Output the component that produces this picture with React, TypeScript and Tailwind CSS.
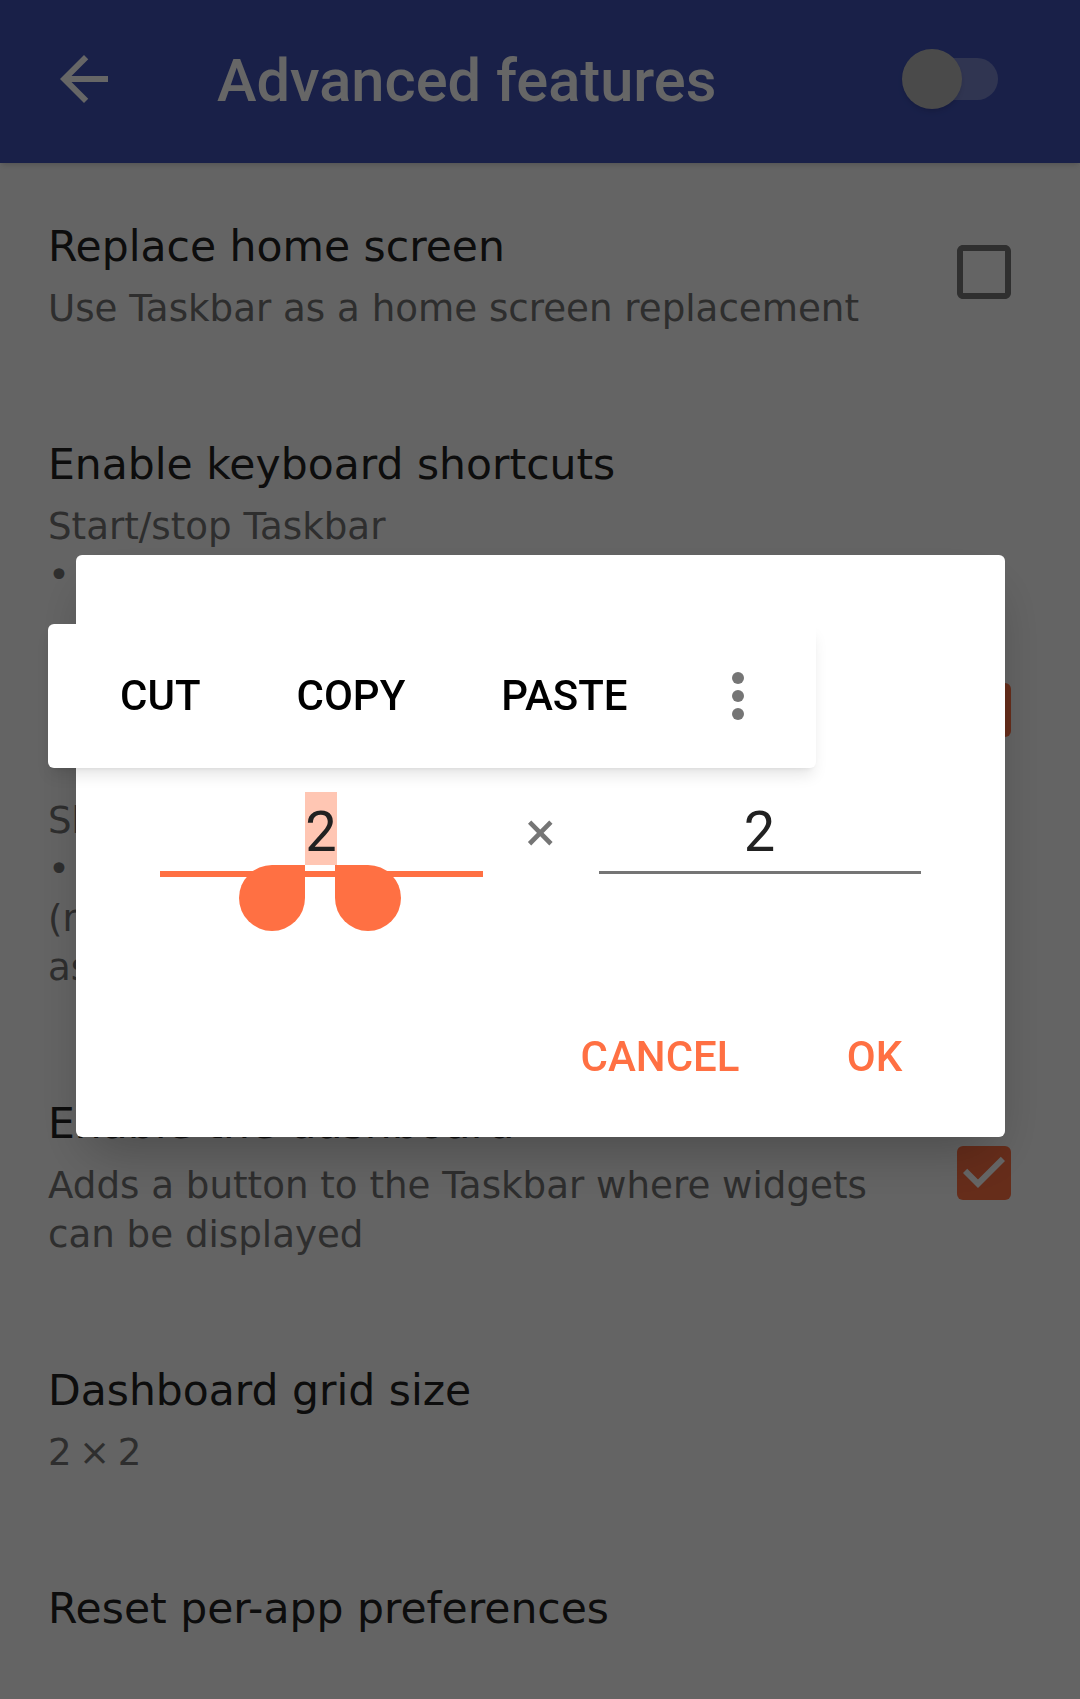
import React from "react";

type PrefProps = {
  title: string;
  summary?: string | string[];
  checked?: boolean;
};

function Checkbox({ checked }: { checked: boolean }) {
  return (
    <svg viewBox="0 0 24 24" className="w-[72px] h-[72px] shrink-0">
      {checked ? (
        <>
          <rect x="3" y="3" width="18" height="18" rx="2" fill="#FF7043" />
          <path d="M10 17l-5-5 1.41-1.41L10 14.17l7.59-7.59L19 8l-9 9z" fill="#fff" />
        </>
      ) : (
        <path
          d="M19 5v14H5V5h14m0-2H5c-1.1 0-2 .9-2 2v14c0 1.1.9 2 2 2h14c1.1 0 2-.9 2-2V5c0-1.1-.9-2-2-2z"
          fill="#757575"
        />
      )}
    </svg>
  );
}

function Pref({ title, summary, checked }: PrefProps) {
  return (
    <div className="flex items-center pl-[48px] pr-[60px] py-[52px] font-['DejaVu_Sans',sans-serif]">
      <div className="flex-1 min-w-0">
        <div className="text-[42.5px] leading-[56px] text-[#212121]">{title}</div>
        {summary && (
          <div className="mt-[9px] text-[37.2px] leading-[49px] text-[#737373]">
            {Array.isArray(summary)
              ? summary.map((line, i) => (
                  <div key={i} className="whitespace-nowrap">
                    {line || "\u00a0"}
                  </div>
                ))
              : summary}
          </div>
        )}
      </div>
      {checked !== undefined && (
        <div className="ml-[33px] mb-[9px]">
          <Checkbox checked={checked} />
        </div>
      )}
    </div>
  );
}

function Handle({ side }: { side: "left" | "right" }) {
  return side === "left" ? (
    <div className="absolute top-[73px] left-[79px] w-[66px] h-[66px] rounded-full rounded-tr-none bg-[#FF7043]" />
  ) : (
    <div className="absolute top-[73px] left-[175px] w-[66px] h-[66px] rounded-full rounded-tl-none bg-[#FF7043]" />
  );
}

export default function App() {
  const shortcuts = [
    "Start/stop Taskbar",
    "• Win + Ctrl + T",
    "",
    "Show/hide Taskbar",
    "• Win + Ctrl + H",
    "",
    "Show/hide start menu",
    "• Win key",
    "(requires a physical keyboard,",
    "as well as root access)",
  ];

  return (
    <div className="relative h-screen overflow-hidden bg-[#fafafa] font-[Roboto,sans-serif]">
      {/* Toolbar */}
      <div className="relative z-10 h-[163px] bg-[#3F51B5] flex items-center pb-[5px] shadow-md">
        <svg viewBox="0 0 24 24" className="ml-[48px] w-[72px] h-[72px] fill-white shrink-0">
          <path d="M20 11H7.83l5.59-5.59L12 4l-8 8 8 8 1.41-1.41L7.83 13H20v-2z" />
        </svg>
        <div className="ml-[97px] pt-[4px] text-[59.6px] leading-[72px] font-medium text-white">
          Advanced features
        </div>
        <div className="ml-auto mr-[82px] relative w-[96px] h-[60px]">
          <div className="absolute right-0 top-[9px] w-[80px] h-[42px] rounded-full bg-white/30" />
          <div className="absolute left-0 top-0 w-[60px] h-[60px] rounded-full bg-[#bababa] shadow-md" />
        </div>
      </div>

      {/* Preferences */}
      <div className="pt-[4px]">
        <Pref
          title="Replace home screen"
          summary="Use Taskbar as a home screen replacement"
          checked={false}
        />
        <Pref title="Enable keyboard shortcuts" summary={shortcuts} checked={true} />
        <Pref
          title="Enable the dashboard"
          summary="Adds a button to the Taskbar where widgets can be displayed"
          checked={true}
        />
        <Pref title="Dashboard grid size" summary={"2\u2009×\u20092"} />
        <Pref title="Reset per-app preferences" />
      </div>

      {/* Dialog */}
      <div className="fixed inset-0 z-20 bg-black/60">
        <div className="flex justify-center pt-[555px]">
          <div className="w-[929px] bg-white rounded-[6px] shadow-2xl px-[84px] pt-[95px] pb-[52px]">
            <div className="text-[48px] leading-[56px] font-medium text-[#212121]">
              Dashboard grid size
            </div>
            <div className="mt-[86px] flex items-start">
              <div className="relative w-[323px]">
                <div className="h-[73px] flex justify-center">
                  <span className="h-[73px] pt-[7px] leading-[66px] text-[56px] text-[#212121] bg-[#FFC6B3]">
                    2
                  </span>
                </div>
                <div className="mt-[6px] h-[6px] bg-[#FF7043]" />
                <Handle side="left" />
                <Handle side="right" />
              </div>
              <div className="w-[116px] h-[73px] pt-[7px] leading-[66px] text-[56px] text-center text-[#757575]">
                ×
              </div>
              <div className="w-[322px]">
                <div className="h-[73px] pt-[7px] leading-[66px] text-[56px] text-center text-[#212121]">
                  2
                </div>
                <div className="mt-[6px] h-[3px] bg-[#757575]" />
              </div>
            </div>
            <div className="mt-[152px] flex justify-end items-center gap-[89px] text-[42px] leading-[56px] font-medium text-[#FF7043]">
              <button className="uppercase">Cancel</button>
              <button className="w-[92px] text-center uppercase">OK</button>
            </div>
          </div>
        </div>

        {/* Floating text selection toolbar */}
        <div className="absolute left-[48px] top-[624px] w-[768px] h-[144px] bg-white rounded-[6px] shadow-lg flex items-center pl-[24px] text-[42px] leading-[56px] font-medium text-black">
          <button className="px-[48px]">CUT</button>
          <button className="px-[48px]">COPY</button>
          <button className="px-[48px]">PASTE</button>
          <div className="w-[124px] flex flex-col items-center gap-[6px]">
            <span className="w-[12px] h-[12px] rounded-full bg-[#757575]" />
            <span className="w-[12px] h-[12px] rounded-full bg-[#757575]" />
            <span className="w-[12px] h-[12px] rounded-full bg-[#757575]" />
          </div>
        </div>
      </div>
    </div>
  );
}
